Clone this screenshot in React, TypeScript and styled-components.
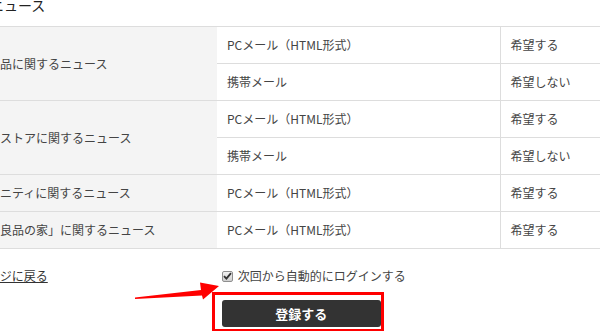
import styled, { createGlobalStyle } from "styled-components";

const GlobalStyle = createGlobalStyle`
  html, body {
    margin: 0;
    padding: 0;
    background: #fff;
    overflow: hidden;
  }
  body {
    font-family: "Noto Sans CJK JP", "Noto Sans", sans-serif;
    color: #444;
  }
`;

type Row = { group: string; kinds: { label: string; value: string }[] };

const rows: Row[] = [
  {
    group: "無印良品に関するニュース",
    kinds: [
      { label: "PCメール（HTML形式）", value: "希望する" },
      { label: "携帯メール", value: "希望しない" },
    ],
  },
  {
    group: "ネットストアに関するニュース",
    kinds: [
      { label: "PCメール（HTML形式）", value: "希望する" },
      { label: "携帯メール", value: "希望しない" },
    ],
  },
  {
    group: "コミュニティに関するニュース",
    kinds: [{ label: "PCメール（HTML形式）", value: "希望する" }],
  },
  {
    group: "「無印良品の家」に関するニュース",
    kinds: [{ label: "PCメール（HTML形式）", value: "希望する" }],
  },
];

const App: React.FC = () => {
  return (
    <Page>
      <GlobalStyle />
      <Content>
        <Heading>メールニュース</Heading>
        <NewsTable>
          <tbody>
            {rows.map((row) =>
              row.kinds.map((kind, i) => (
                <tr key={row.group + i}>
                  {i === 0 && (
                    <GroupCell rowSpan={row.kinds.length}>{row.group}</GroupCell>
                  )}
                  <KindCell>{kind.label}</KindCell>
                  <ValueCell>{kind.value}</ValueCell>
                </tr>
              ))
            )}
          </tbody>
        </NewsTable>
        <Footer>
          <BackLink href="#">前のページに戻る</BackLink>
          <FormArea>
            <CheckRow>
              <CheckBox>
                <svg width="9" height="8" viewBox="0 0 9 8">
                  <path
                    d="M1 4.2 L3.4 6.6 L8 1.2"
                    fill="none"
                    stroke="#333"
                    strokeWidth="1.9"
                  />
                </svg>
              </CheckBox>
              <CheckLabel>次回から自動的にログインする</CheckLabel>
            </CheckRow>
            <SubmitButton>登録する</SubmitButton>
          </FormArea>
        </Footer>
      </Content>
      {/* 注釈：赤枠と矢印 */}
      <Highlight />
      <Arrow width="95" height="30" viewBox="130 275 95 30">
        <polygon
          points="135,297.6 201,290 200,282.5 219,286 203,299.5 202,295.5 135,299"
          fill="#f00"
        />
      </Arrow>
    </Page>
  );
};

const Page = styled.div`
  position: relative;
  width: 600px;
  height: 331px;
  overflow: hidden;
`;

const Content = styled.div`
  margin-left: -60px;
  width: 700px;
`;

const Heading = styled.h2`
  margin: -5px 0 11px;
  padding-left: 8px;
  font-size: 14px;
  line-height: 20px;
  font-weight: normal;
  color: #222;
`;

const NewsTable = styled.table`
  width: 700px;
  border-collapse: collapse;
  border-top: 1px solid #ddd;
  font-size: 12px;
  table-layout: fixed;
`;

const Cell = styled.td`
  padding: 12px 10px;
  line-height: 12px;
  border-bottom: 1px solid #ddd;
  text-align: left;
  white-space: nowrap;
  vertical-align: middle;
`;

const GroupCell = styled(Cell)`
  width: 277px;
  box-sizing: border-box;
  padding-left: 24px;
  background: #f4f4f4;
`;

const KindCell = styled(Cell)`
  width: 283px;
  box-sizing: border-box;
  border-right: 1px solid #ddd;
`;

const ValueCell = styled(Cell)`
  box-sizing: border-box;
`;

const Footer = styled.div`
  display: flex;
  align-items: flex-start;
  padding-top: 20px;
`;

const BackLink = styled.a`
  margin-left: 12px;
  font-size: 12px;
  line-height: 14px;
  color: #333;
  text-decoration: underline;
`;

const FormArea = styled.div`
  display: flex;
  flex-direction: column;
  margin-left: 174px;
`;

const CheckRow = styled.div`
  display: flex;
  align-items: center;
  gap: 5px;
  height: 14px;
`;

const CheckBox = styled.span`
  display: flex;
  align-items: center;
  justify-content: center;
  width: 11px;
  height: 11px;
  box-sizing: border-box;
  border: 1px solid #8f8f8f;
  border-radius: 2px;
  background: linear-gradient(#f2f2f2, #cfcfcf);
`;

const CheckLabel = styled.span`
  font-size: 12px;
  line-height: 14px;
  color: #444;
`;

const SubmitButton = styled.button`
  margin-top: 17px;
  width: 159px;
  height: 27px;
  border: none;
  border-radius: 3px;
  background: #333;
  color: #fff;
  font-family: "Noto Sans CJK JP", sans-serif;
  font-size: 13px;
  font-weight: bold;
  cursor: pointer;
`;

const Highlight = styled.div`
  position: absolute;
  left: 212px;
  top: 292px;
  width: 172px;
  height: 40px;
  box-sizing: border-box;
  border: 3px solid #f00;
  pointer-events: none;
`;

const Arrow = styled.svg`
  position: absolute;
  left: 130px;
  top: 275px;
`;

export default App;
